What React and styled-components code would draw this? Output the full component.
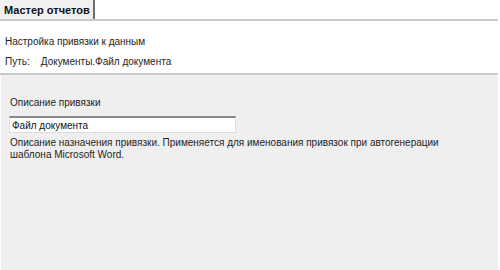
import React from "react";
import styled, { createGlobalStyle } from "styled-components";

const GlobalStyle = createGlobalStyle`
  html, body {
    margin: 0;
    padding: 0;
    background: #ffffff;
  }
  body {
    font-family: "Liberation Sans", Arial, sans-serif;
    font-size: 10px;
    line-height: 12px;
    color: #1e1e1e;
  }
`;

const Window = styled.div`
  width: 498px;
  height: 270px;
  display: flex;
  flex-direction: column;
  background: #ffffff;
`;

const TabStrip = styled.div`
  display: flex;
  height: 19px;
  border-bottom: 2px solid #c9c9c9;
`;

const Tab = styled.div`
  display: flex;
  align-items: center;
  padding: 1px 3px 0 4px;
  background: #f0f0f0;
  border-right: 2px solid #6f6f6f;
  font-weight: bold;
  font-size: 11px;
  color: #111;
`;

const Header = styled.div`
  display: flex;
  flex-direction: column;
  padding: 15px 5px 0 5px;
  height: 54px;
  box-sizing: border-box;
  gap: 8px;
  border-bottom: 2px solid #c9c9c9;
`;

const PathRow = styled.div`
  display: flex;
  gap: 11px;
`;

const Body = styled.div`
  flex: 1;
  background: #efefef;
  margin-left: 1px;
  padding: 22px 9px 0 9px;
  display: flex;
  flex-direction: column;
`;

const Label = styled.div`
  margin-bottom: 7px;
`;

const Input = styled.input`
  width: 227px;
  height: 17px;
  box-sizing: border-box;
  margin-left: -1px;
  padding: 0 2px;
  border: 1px solid #dcdcdc;
  border-top: 2px solid #8a8a8a;
  background: #ffffff;
  font-family: inherit;
  font-size: 10px;
  color: #111;
  outline: none;
`;

const Hint = styled.div`
  margin-top: 4px;
  line-height: 12px;
  width: 450px;
`;

export default function App() {
  return (
    <>
      <GlobalStyle />
      <Window>
        <TabStrip>
          <Tab>Мастер отчетов</Tab>
        </TabStrip>
        <Header>
          <div>Настройка привязки к данным</div>
          <PathRow>
            <span>Путь:</span>
            <span>Документы.Файл документа</span>
          </PathRow>
        </Header>
        <Body>
          <Label>Описание привязки</Label>
          <Input defaultValue="Файл документа" />
          <Hint>
            Описание назначения привязки. Применяется для именования привязок
            при автогенерации шаблона Microsoft Word.
          </Hint>
        </Body>
      </Window>
    </>
  );
}
